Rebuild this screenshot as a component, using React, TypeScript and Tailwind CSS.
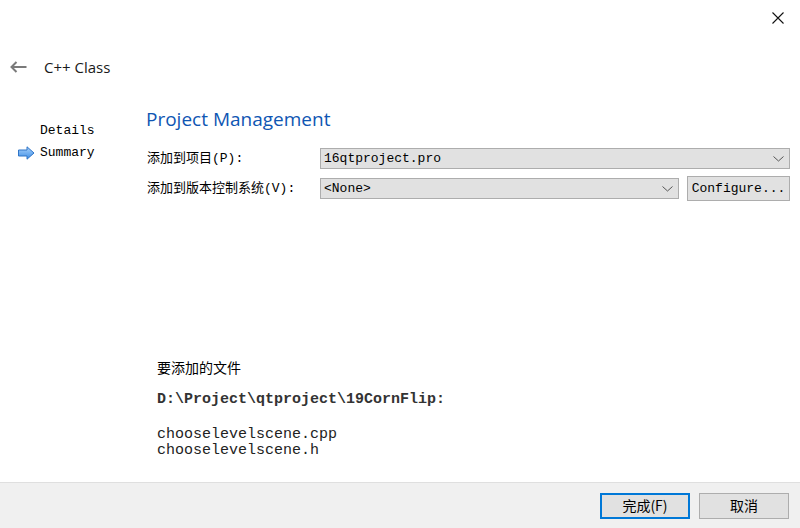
import React from 'react'

const mono = { fontFamily: '"Liberation Mono", "Noto Sans CJK SC", monospace' }

function Chevron() {
  return (
    <svg width="11" height="6" viewBox="0 0 11 6" className="shrink-0">
      <path d="M0.5 0.5 L5.5 5 L10.5 0.5" fill="none" stroke="#555" strokeWidth="1" />
    </svg>
  )
}

function NavArrow() {
  return (
    <svg width="17" height="14" viewBox="0 0 17 14">
      <defs>
        <linearGradient id="blueArrow" x1="0" y1="0" x2="0" y2="1">
          <stop offset="0" stopColor="#a9d2fb" />
          <stop offset="1" stopColor="#3d8ee6" />
        </linearGradient>
      </defs>
      <path
        d="M0.5 4 H9 V0.8 L16 7 L9 13.2 V10 H0.5 Z"
        fill="url(#blueArrow)"
        stroke="#2f74c7"
        strokeWidth="1"
        strokeLinejoin="round"
      />
    </svg>
  )
}

export default function App() {
  return (
    <div
      className="w-[800px] h-[528px] flex flex-col bg-white text-black overflow-hidden"
      style={{ fontFamily: '"Noto Sans CJK SC", "Noto Sans", sans-serif' }}
    >
      {/* title bar */}
      <div className="h-[36px] flex justify-end items-center pr-[16px]">
        <svg width="12" height="12" viewBox="0 0 12 12">
          <path d="M0.5 0.5 L11.5 11.5 M11.5 0.5 L0.5 11.5" stroke="#111" strokeWidth="1.1" />
        </svg>
      </div>

      {/* wizard header */}
      <div className="mt-[20px] h-[22px] flex items-center pl-[10px]">
        <svg width="17" height="12" viewBox="0 0 17 12">
          <path d="M1.5 6 H16.5 M6.5 1 L1.5 6 L6.5 11" fill="none" stroke="#7a7a7a" strokeWidth="2" />
        </svg>
        <span
          className="ml-[17px] text-[15px] text-[#1a1a1a]"
          style={{ fontFamily: '"Open Sans", "Noto Sans", sans-serif' }}
        >
          C++ Class
        </span>
      </div>

      <div className="flex-1 flex mt-[22px]">
        {/* steps */}
        <div className="w-[146px] shrink-0 pl-[18px] pt-[20px] text-[13px]" style={mono}>
          <div className="h-[22px] flex items-center">
            <span className="w-[22px]" />
            <span>Details</span>
          </div>
          <div className="h-[22px] flex items-center">
            <span className="w-[22px] flex items-center">
              <NavArrow />
            </span>
            <span>Summary</span>
          </div>
        </div>

        {/* page */}
        <div className="flex-1 flex flex-col pr-[10px]">
          <div
            className="mt-[6px] h-[26px] leading-[26px] text-[19px] text-[#0f56b3]"
            style={{ fontFamily: '"Open Sans", "Noto Sans", sans-serif' }}
          >
            Project Management
          </div>

          <div className="mt-[16px] flex items-center h-[21px] text-[13px]">
            <span className="w-[174px] shrink-0 pl-[1px]" style={mono}>
              添加到项目(P):
            </span>
            <div
              className="flex-1 h-[21px] bg-[#e1e1e1] border border-[#adadad] flex items-center justify-between pl-[3px] pr-[5px]"
              style={mono}
            >
              <span>16qtproject.pro</span>
              <Chevron />
            </div>
          </div>

          <div className="mt-[7px] flex items-center h-[25px] text-[13px]">
            <span className="w-[174px] shrink-0 pl-[1px]" style={mono}>
              添加到版本控制系统(V):
            </span>
            <div
              className="w-[359px] h-[21px] bg-[#e1e1e1] border border-[#adadad] flex items-center justify-between pl-[3px] pr-[5px]"
              style={mono}
            >
              <span>&lt;None&gt;</span>
              <Chevron />
            </div>
            <button
              className="ml-[8px] w-[103px] h-[25px] bg-[#e1e1e1] border border-[#adadad] text-[13px] text-center"
              style={mono}
            >
              Configure...
            </button>
          </div>

          <div className="mt-auto pl-[11px] pb-[23px]">
            <div className="text-[14px] leading-[18px]">要添加的文件</div>
            <div
              className="mt-[16px] text-[15px] leading-[16px] font-bold text-[#333]"
              style={{ fontFamily: '"Liberation Mono", monospace' }}
            >
              D:\Project\qtproject\19CornFlip:
            </div>
            <div
              className="mt-[19px] text-[15px] leading-[16px] text-[#222]"
              style={{ fontFamily: '"Liberation Mono", monospace' }}
            >
              <div>chooselevelscene.cpp</div>
              <div>chooselevelscene.h</div>
            </div>
          </div>
        </div>
      </div>

      {/* footer */}
      <div className="h-[46px] shrink-0 bg-[#f0f0f0] border-t border-[#dfdfdf] flex items-center justify-end pr-[11px] gap-[9px]">
        <button className="w-[90px] h-[26px] bg-[#e1e1e1] border-2 border-[#0078d7] text-[14px] flex items-center justify-center">
          完成(F)
        </button>
        <button className="w-[90px] h-[26px] bg-[#e1e1e1] border border-[#adadad] text-[14px] flex items-center justify-center">
          取消
        </button>
      </div>
    </div>
  )
}
